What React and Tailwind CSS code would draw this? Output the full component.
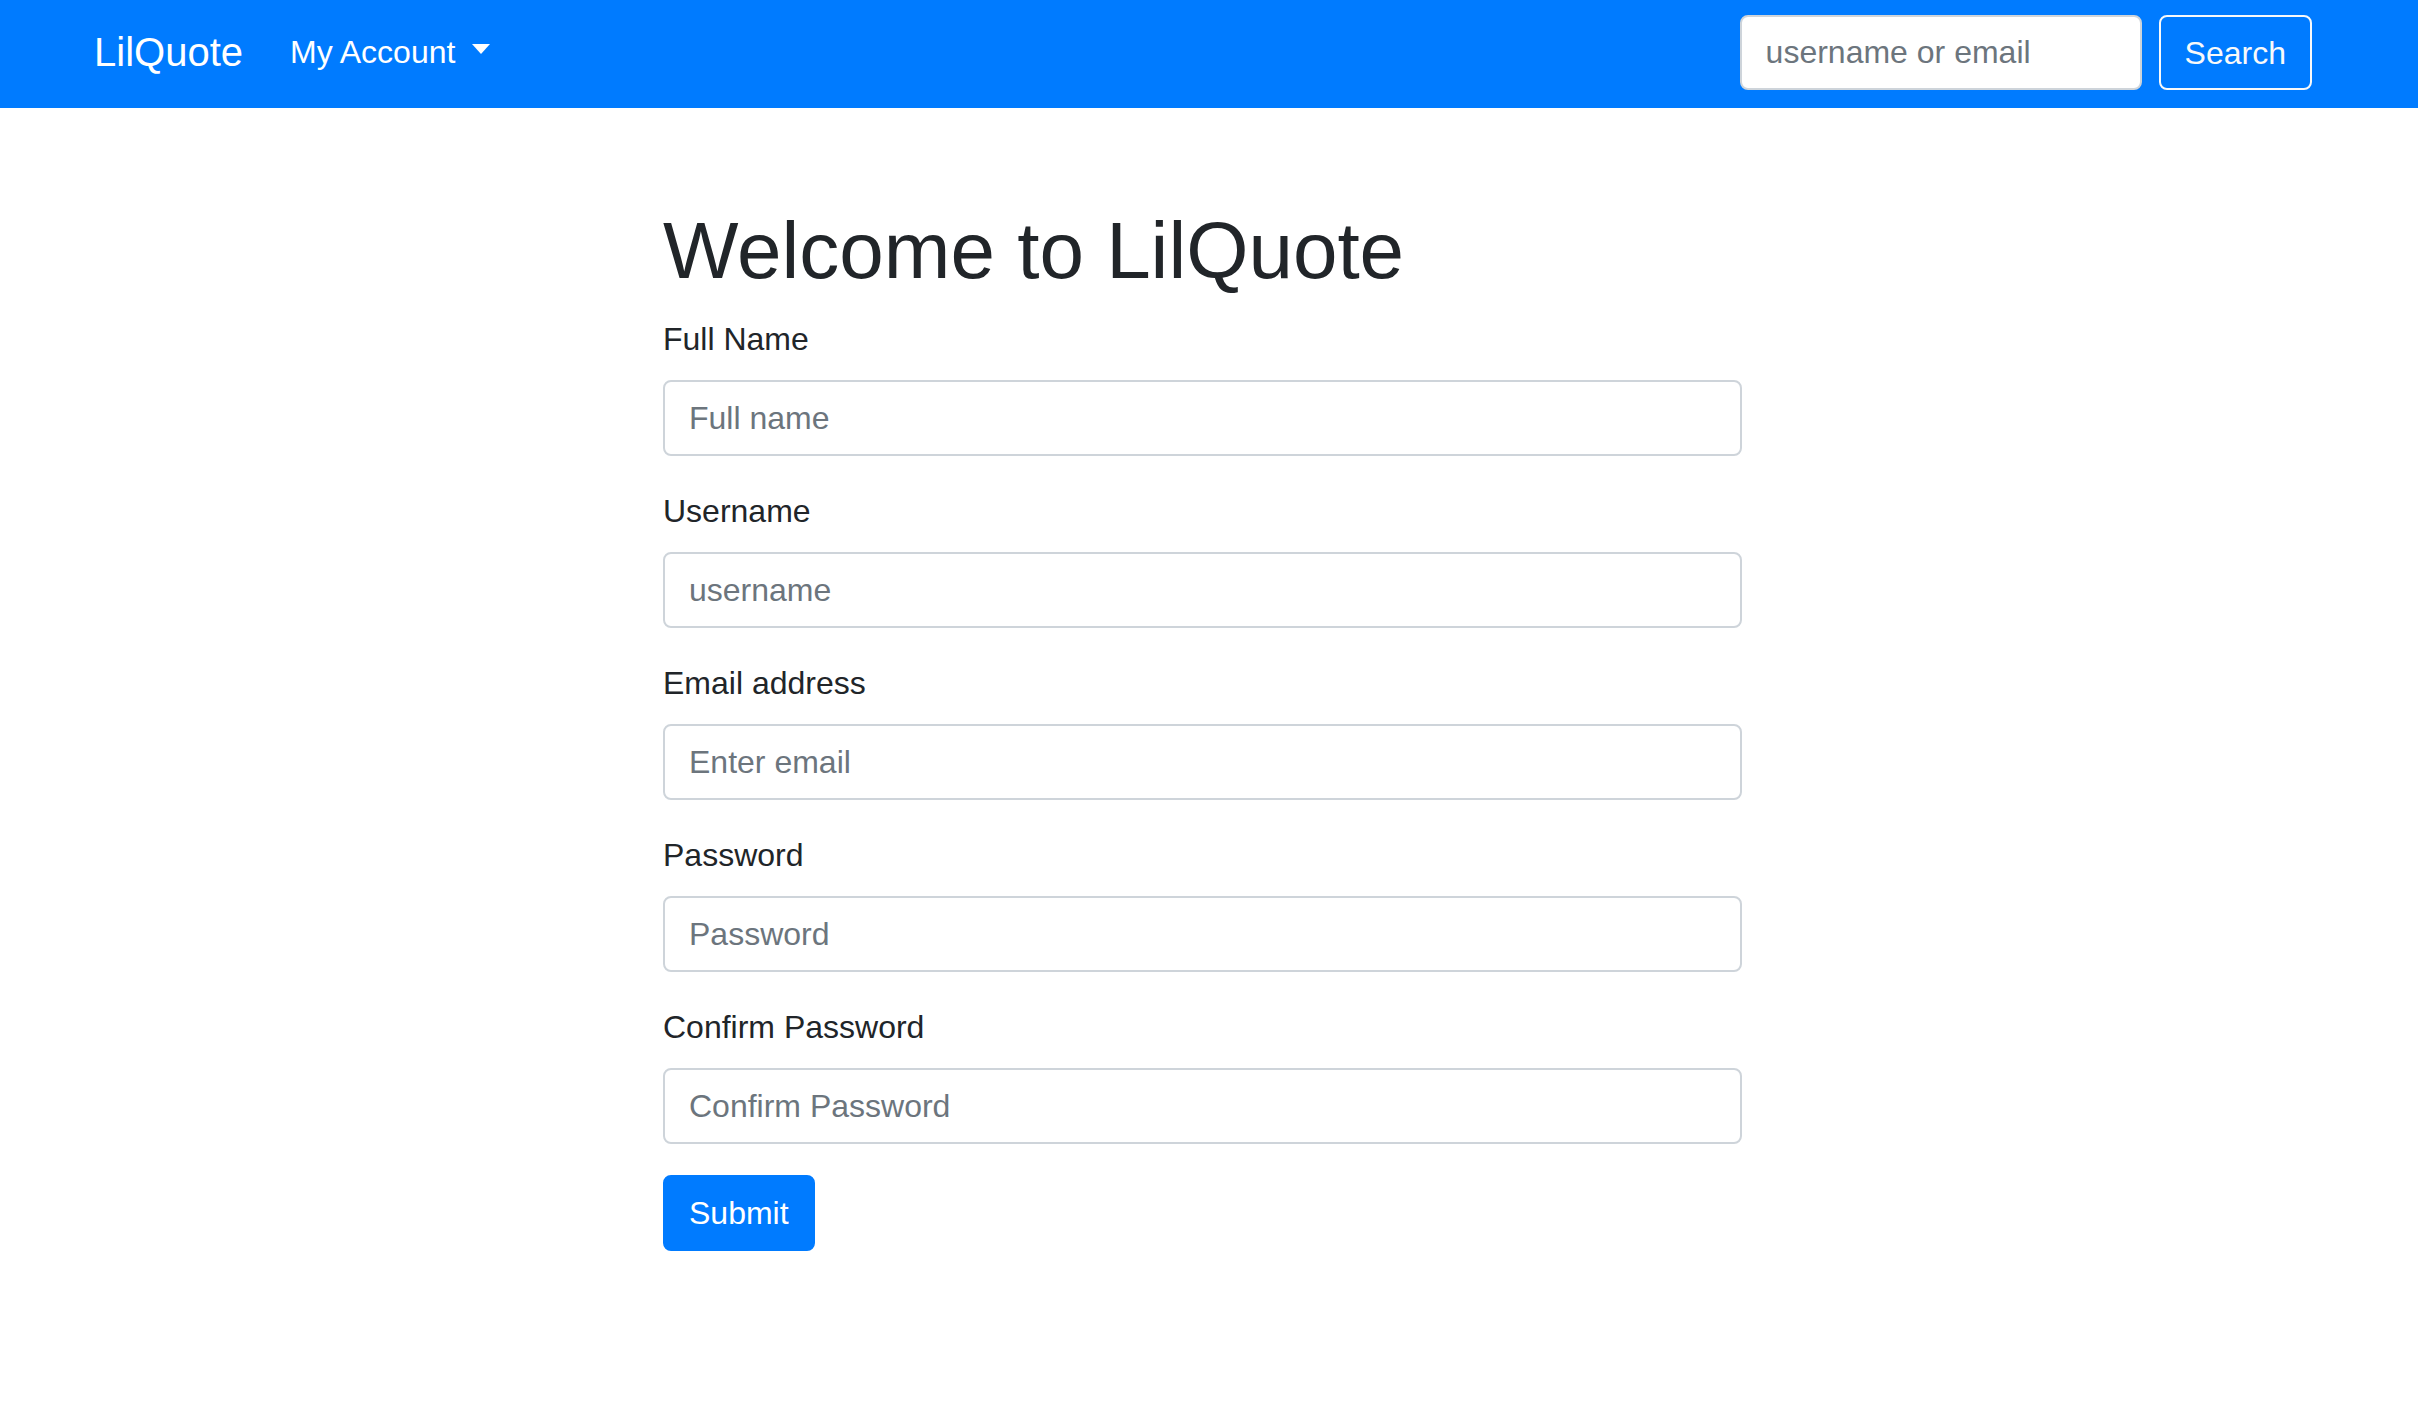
import React from 'react';

const fields = [
  { label: 'Full Name', placeholder: 'Full name', type: 'text' },
  { label: 'Username', placeholder: 'username', type: 'text' },
  { label: 'Email address', placeholder: 'Enter email', type: 'email' },
  { label: 'Password', placeholder: 'Password', type: 'password' },
  { label: 'Confirm Password', placeholder: 'Confirm Password', type: 'password' },
];

export default function App() {
  return (
    <div className="min-h-screen bg-white text-[#212529] font-['Liberation_Sans',Arial,sans-serif]">
      {/* Navbar */}
      <nav className="h-[108px] bg-[#007bff] flex items-center justify-between pl-[94px] pr-[106px]">
        <div className="flex items-center mb-[5px]">
          <a className="text-white text-[40px] leading-[60px]">LilQuote</a>
          <div className="flex items-center ml-[47px] text-white text-[32px] leading-[48px]">
            <span>My Account</span>
            <span className="ml-[17px] mb-[5px] w-0 h-0 border-t-[10px] border-t-white border-x-[9px] border-x-transparent"></span>
          </div>
        </div>
        <form className="flex items-center mb-[3px]">
          <input
            type="text"
            placeholder="username or email"
            className="w-[402px] h-[75px] px-[24px] text-[32px] bg-white border-2 border-[#ced4da] rounded-[8px] placeholder:text-[#6c757d] outline-none"
          />
          <button
            type="button"
            className="ml-[17px] h-[75px] px-[24px] text-[32px] text-[#f8f9fa] border-2 border-[#f8f9fa] rounded-[8px]"
          >
            Search
          </button>
        </form>
      </nav>

      {/* Sign up form */}
      <div className="ml-[663px] w-[1079px] pt-[95px] pb-[100px]">
        <h1 className="text-[80px] leading-[96px] mb-[16px]">Welcome to LilQuote</h1>
        {fields.map((f) => (
          <div key={f.label} className="mb-[31px]">
            <label className="block text-[32px] leading-[48px] mb-[17px]">{f.label}</label>
            <input
              type={f.type}
              placeholder={f.placeholder}
              className="block w-full h-[76px] px-[24px] text-[32px] bg-white border-2 border-[#ced4da] rounded-[8px] placeholder:text-[#6c757d] outline-none"
            />
          </div>
        ))}
        <button
          type="button"
          className="h-[76px] px-[24px] text-[32px] text-white bg-[#007bff] border-2 border-[#007bff] rounded-[8px]"
        >
          Submit
        </button>
      </div>
    </div>
  );
}
